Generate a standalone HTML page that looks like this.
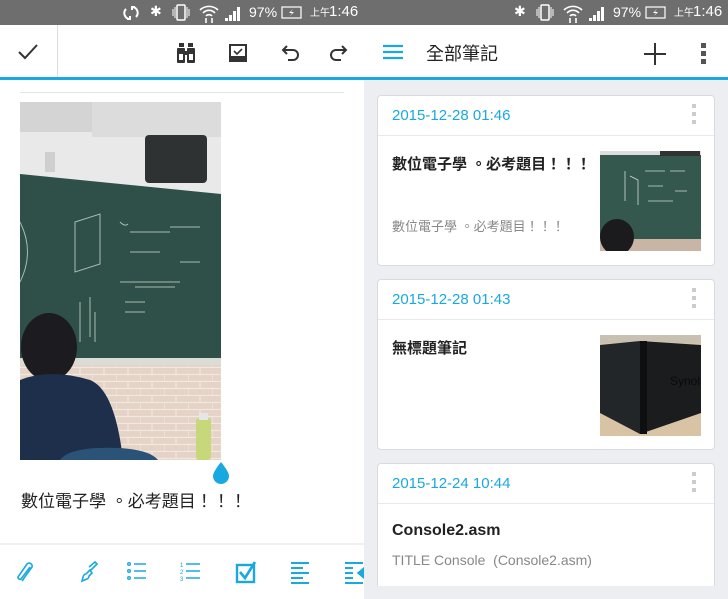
<!DOCTYPE html>
<html><head><meta charset="utf-8"><style>
*{margin:0;padding:0;box-sizing:border-box}
html,body{width:728px;height:599px;overflow:hidden}
body{position:relative;font-family:"Liberation Sans","Noto Sans CJK TC",sans-serif;background:#fff}
.abs{position:absolute}
.status{top:0;height:25px;background:#6e6e6e;color:#fff;font-size:14px}
.card{position:absolute;left:377px;width:338px;background:#fff;border:1px solid #d9dbe0;border-radius:4px;overflow:hidden}
.card .hd{height:40px;border-bottom:1px solid #e8e9ec;color:#1aa8e0;font-size:15px;padding:11px 0 0 14px;position:relative}
.dots{position:absolute;right:18px;top:8px;width:4px}
.dots i{display:block;width:4px;height:4px;background:#ccc;margin-bottom:4px}
.t{font-size:15px;font-weight:bold;color:#222;letter-spacing:0}
.s{font-size:13px;color:#888;letter-spacing:0}
</style></head><body>
<div class="abs status" style="left:0;width:364px">
 <svg class="abs" style="left:122px;top:4px" width="18" height="18" viewBox="0 0 18 18" fill="none" stroke="#fff" stroke-width="2"><path d="M4 5a6 6 0 0 0 3 10M14 13a6 6 0 0 0-3-10"/><path d="M5 15h3v-3M13 3h-3v3"/></svg>
 <span class="abs" style="left:150px;top:3px">✱</span>
 <svg class="abs" style="left:171px;top:4px" width="20" height="17"><rect x="6" y="1" width="8" height="15" rx="1" fill="none" stroke="#fff" stroke-width="1.5"/><path d="M2 5v7M18 5v7M4 3v11M16 3v11" stroke="#fff"/></svg>
 <svg class="abs" style="left:198px;top:3px" width="22" height="20" fill="none" stroke="#fff" stroke-width="1.6"><path d="M2 7a13 13 0 0 1 18 0M5 10a8 8 0 0 1 12 0M8 13a4 4 0 0 1 6 0"/><path d="M8 15v5M14 15v5" /></svg>
 <svg class="abs" style="left:224px;top:6px" width="18" height="15"><path d="M1 15h3v-3H1zM5 15h3V9H5zM9 15h3V5H9zM13 15h3V1h-3z" fill="#fff"/></svg>
 <span class="abs" style="left:249px;top:4px">97%</span>
 <svg class="abs" style="left:281px;top:6px" width="22" height="13"><rect x="1" y="1" width="19" height="11" fill="none" stroke="#fff" stroke-width="1.2"/><path d="M12 3l-4 4h3l-2 3 4-4h-3z" fill="#fff"/></svg>
 <span class="abs" style="left:310px;top:4px;font-size:10px">上午</span><span class="abs" style="left:329px;top:3px;font-size:15px">1:46</span>
</div>
<div class="abs status" style="left:364px;width:364px">
 <span class="abs" style="left:150px;top:3px">✱</span>
 <svg class="abs" style="left:171px;top:4px" width="20" height="17"><rect x="6" y="1" width="8" height="15" rx="1" fill="none" stroke="#fff" stroke-width="1.5"/><path d="M2 5v7M18 5v7M4 3v11M16 3v11" stroke="#fff"/></svg>
 <svg class="abs" style="left:198px;top:3px" width="22" height="20" fill="none" stroke="#fff" stroke-width="1.6"><path d="M2 7a13 13 0 0 1 18 0M5 10a8 8 0 0 1 12 0M8 13a4 4 0 0 1 6 0"/><path d="M8 15v5M14 15v5"/></svg>
 <svg class="abs" style="left:224px;top:6px" width="18" height="15"><path d="M1 15h3v-3H1zM5 15h3V9H5zM9 15h3V5H9zM13 15h3V1h-3z" fill="#fff"/></svg>
 <span class="abs" style="left:249px;top:4px">97%</span>
 <svg class="abs" style="left:281px;top:6px" width="22" height="13"><rect x="1" y="1" width="19" height="11" fill="none" stroke="#fff" stroke-width="1.2"/><path d="M12 3l-4 4h3l-2 3 4-4h-3z" fill="#fff"/></svg>
 <span class="abs" style="left:310px;top:4px;font-size:10px">上午</span><span class="abs" style="left:329px;top:3px;font-size:15px">1:46</span>
</div>
<div class="abs" style="left:57px;top:25px;width:1px;height:52px;background:#ddd"></div>
<svg class="abs" style="left:17px;top:42px" width="22" height="20"><path d="M2 10l6 6L20 3" fill="none" stroke="#333" stroke-width="2"/></svg>
<svg class="abs" style="left:175px;top:42px" width="22" height="22" fill="#333"><rect x="4" y="1" width="5" height="4"/><rect x="13" y="1" width="5" height="4"/><rect x="2" y="6" width="8" height="15" rx="1"/><rect x="12" y="6" width="8" height="15" rx="1"/><rect x="4" y="12" width="4" height="6" fill="#fff"/><rect x="14" y="12" width="4" height="6" fill="#fff"/><rect x="9" y="9" width="4" height="4"/></svg>
<svg class="abs" style="left:227px;top:42px" width="22" height="22"><rect x="2" y="2" width="18" height="18" fill="#333"/><rect x="4" y="4" width="14" height="10" fill="#fff"/><path d="M7 9l3 3 5-5" fill="none" stroke="#333" stroke-width="1.6"/></svg>
<svg class="abs" style="left:280px;top:42px" width="22" height="22" fill="none" stroke="#333" stroke-width="2"><path d="M7 4L3 8l4 4M3 8h10a5 5 0 0 1 0 10H8"/></svg>
<svg class="abs" style="left:327px;top:42px" width="22" height="22" fill="none" stroke="#333" stroke-width="2"><path d="M15 4l4 4-4 4M19 8H9a5 5 0 0 0 0 10h5"/></svg>
<div class="abs" style="left:0;top:77px;width:728px;height:3px;background:#1aa8e0"></div>
<div class="abs" style="left:20px;top:92px;width:324px;height:1px;background:#e6e6e6"></div>
<svg class="abs" style="left:20px;top:102px" width="201" height="358" viewBox="0 0 201 358">
 <defs><pattern id="br" width="24" height="14" patternUnits="userSpaceOnUse"><rect width="24" height="14" fill="#e4d3c6"/><path d="M0 13.5h24M0 6.5h24M12 0v7M0 7v7" stroke="#f1e8e0" stroke-width="1.2"/></pattern></defs>
 <rect width="201" height="358" fill="#e9e9e9"/>
 <rect y="0" width="201" height="30" fill="#d4d4d4"/>
 <rect x="72" y="0" width="129" height="35" fill="#dcdcdc"/>
 <rect x="125" y="33" width="62" height="48" rx="4" fill="#2e3232"/>
 <rect x="25" y="50" width="10" height="20" fill="#cfcfcf"/>
 <polygon points="0,72 201,92 201,258 0,256" fill="#2f5048"/>
 <rect y="256" width="201" height="8" fill="#dcdcd6"/>
 <rect y="263" width="201" height="95" fill="url(#br)"/>
 <g stroke="#c8d6cf" stroke-width="1" fill="none" opacity=".8">
  <path d="M55 120l25-8v50l-25 8zM100 120q5 5 8 2M110 130h40M110 150h30M150 125h30M160 160h20M100 180h60M115 185h40M105 200h20M105 210h20M60 200v40M70 195v40M75 210v30M0 120c10 20 10 40 0 60"/>
 </g>
 <ellipse cx="29" cy="245" rx="28" ry="34" fill="#1c1c20"/>
 <path d="M0 278q30-12 70 0q25 10 33 80H0z" fill="#1e2f4c"/>
 <path d="M40 358q10-14 60-12q30 2 38 12z" fill="#2a5377"/>
 <rect x="176" y="316" width="15" height="42" rx="3" fill="#c7d87a"/>
 <rect x="179" y="311" width="9" height="7" fill="#e6e6e6"/>
</svg>
<svg class="abs" style="left:211px;top:460px" width="20" height="26"><path d="M10 2Q2 12 2 16a8 8 0 0 0 16 0Q18 12 10 2z" fill="#1aa8e0"/></svg>
<div class="abs" style="left:21px;top:487px;font-size:17px;color:#222;letter-spacing:0">數位電子學 。必考題目！！！</div>
<div class="abs" style="left:0;top:543px;width:364px;height:2px;background:#f0f0f0"></div>
<svg class="abs" style="left:14px;top:559px" width="350" height="26" fill="none" stroke="#1aa8e0" stroke-width="1.6">
 <path d="M8 22L18 8a3 3 0 0 0-5-3L4 18a2 2 0 0 0 3 2l9-12"/>
 <path d="M75 8l6-5 2 2-6 6M76 11l-4 4q-2 0-3 3l-1 4 5-2q2-1 2-3l3-3z"/>
 <g stroke-width="1.4"><circle cx="115" cy="5" r="1.3"/><circle cx="115" cy="12" r="1.3"/><circle cx="115" cy="19" r="1.3"/><path d="M120 5h12M120 12h12M120 19h12"/></g>
 <g stroke-width="1.4"><path d="M172 5h14M172 12h14M172 19h14"/></g>
 <text x="166" y="8" font-size="6" fill="#1aa8e0" stroke="none">1</text><text x="166" y="15" font-size="6" fill="#1aa8e0" stroke="none">2</text><text x="166" y="22" font-size="6" fill="#1aa8e0" stroke="none">3</text>
 <rect x="223" y="6" width="17" height="17" stroke-width="2.4"/><path d="M226 13l5 6 10-16" stroke-width="2.6"/>
 <path d="M277 4h18M277 9h12M277 14h18M277 19h12M277 24h18" stroke-width="2"/>
 <path d="M331 4h18M331 9h8M331 14h8M331 19h8M331 24h18" stroke-width="2"/><path d="M350 9l-6 5 6 5z" fill="#1aa8e0"/>
</svg>
<div class="abs" style="left:364px;top:80px;width:364px;height:519px;background:#eceef2"></div>
<div class="abs" style="left:364px;top:25px;width:364px;height:52px;background:#fff"></div>
<svg class="abs" style="left:382px;top:43px" width="22" height="18"><path d="M1 3h20M1 9h20M1 15h20" stroke="#1aa8e0" stroke-width="2.2"/></svg>
<div class="abs" style="left:426px;top:40px;font-size:18px;color:#222">全部筆記</div>
<svg class="abs" style="left:643px;top:42px" width="24" height="24"><path d="M12 1v22M1 12h22" stroke="#333" stroke-width="2"/></svg>
<div class="abs" style="left:701px;top:43px;width:6px"><i style="display:block;width:5px;height:5px;background:#555;margin-bottom:3px"></i><i style="display:block;width:5px;height:5px;background:#555;margin-bottom:3px"></i><i style="display:block;width:5px;height:5px;background:#555"></i></div>

<div class="card" style="top:95px;height:171px">
 <div class="hd">2015-12-28 01:46<div class="dots"><i></i><i></i><i></i></div></div>
 <div class="abs t" style="left:14px;top:57px">數位電子學 。必考題目！！！</div>
 <div class="abs s" style="left:14px;top:120px">數位電子學 。必考題目！！！</div>
 <svg class="abs" style="left:222px;top:55px" width="101" height="100">
  <rect width="101" height="100" fill="#34574e"/><rect width="101" height="4" fill="#ddd"/><rect x="60" y="0" width="40" height="5" fill="#333"/>
  <rect y="88" width="101" height="12" fill="#c9b5a5"/>
  <g stroke="#cfdcd5" stroke-width=".8" fill="none"><path d="M25 20v30M30 25l8 4v25M45 20h20M48 35h15M70 20h15M48 50h25M75 40h12"/></g>
  <ellipse cx="17" cy="86" rx="17" ry="18" fill="#1b1b1e"/>
 </svg>
</div>
<div class="card" style="top:279px;height:171px">
 <div class="hd">2015-12-28 01:43<div class="dots"><i></i><i></i><i></i></div></div>
 <div class="abs t" style="left:14px;top:57px">無標題筆記</div>
 <svg class="abs" style="left:222px;top:55px" width="101" height="101">
  <rect width="101" height="101" fill="#d8c4a4"/><rect width="101" height="8" fill="#c8c0b0"/>
  <polygon points="0,10 40,6 40,99 0,78" fill="#232628"/>
  <polygon points="40,6 101,10 101,78 40,99" fill="#1a1c1e"/>
  <rect x="40" y="6" width="7" height="93" fill="#0e0f10"/>
  <text x="70" y="50" font-size="12" fill="#0a0a0a" font-family="Liberation Sans">Synol</text>
 </svg>
</div>
<div class="card" style="top:463px;height:140px">
 <div class="hd">2015-12-24 10:44<div class="dots"><i></i><i></i><i></i></div></div>
 <div class="abs" style="left:14px;top:58px;font-size:16px;font-weight:bold;color:#222">Console2.asm</div>
 <div class="abs" style="left:14px;top:88px;font-size:14px;color:#888">TITLE Console&nbsp; (Console2.asm)</div>
</div>
<div class="abs" style="left:364px;top:586px;width:364px;height:13px;background:#eceef2"></div>
</body></html>
